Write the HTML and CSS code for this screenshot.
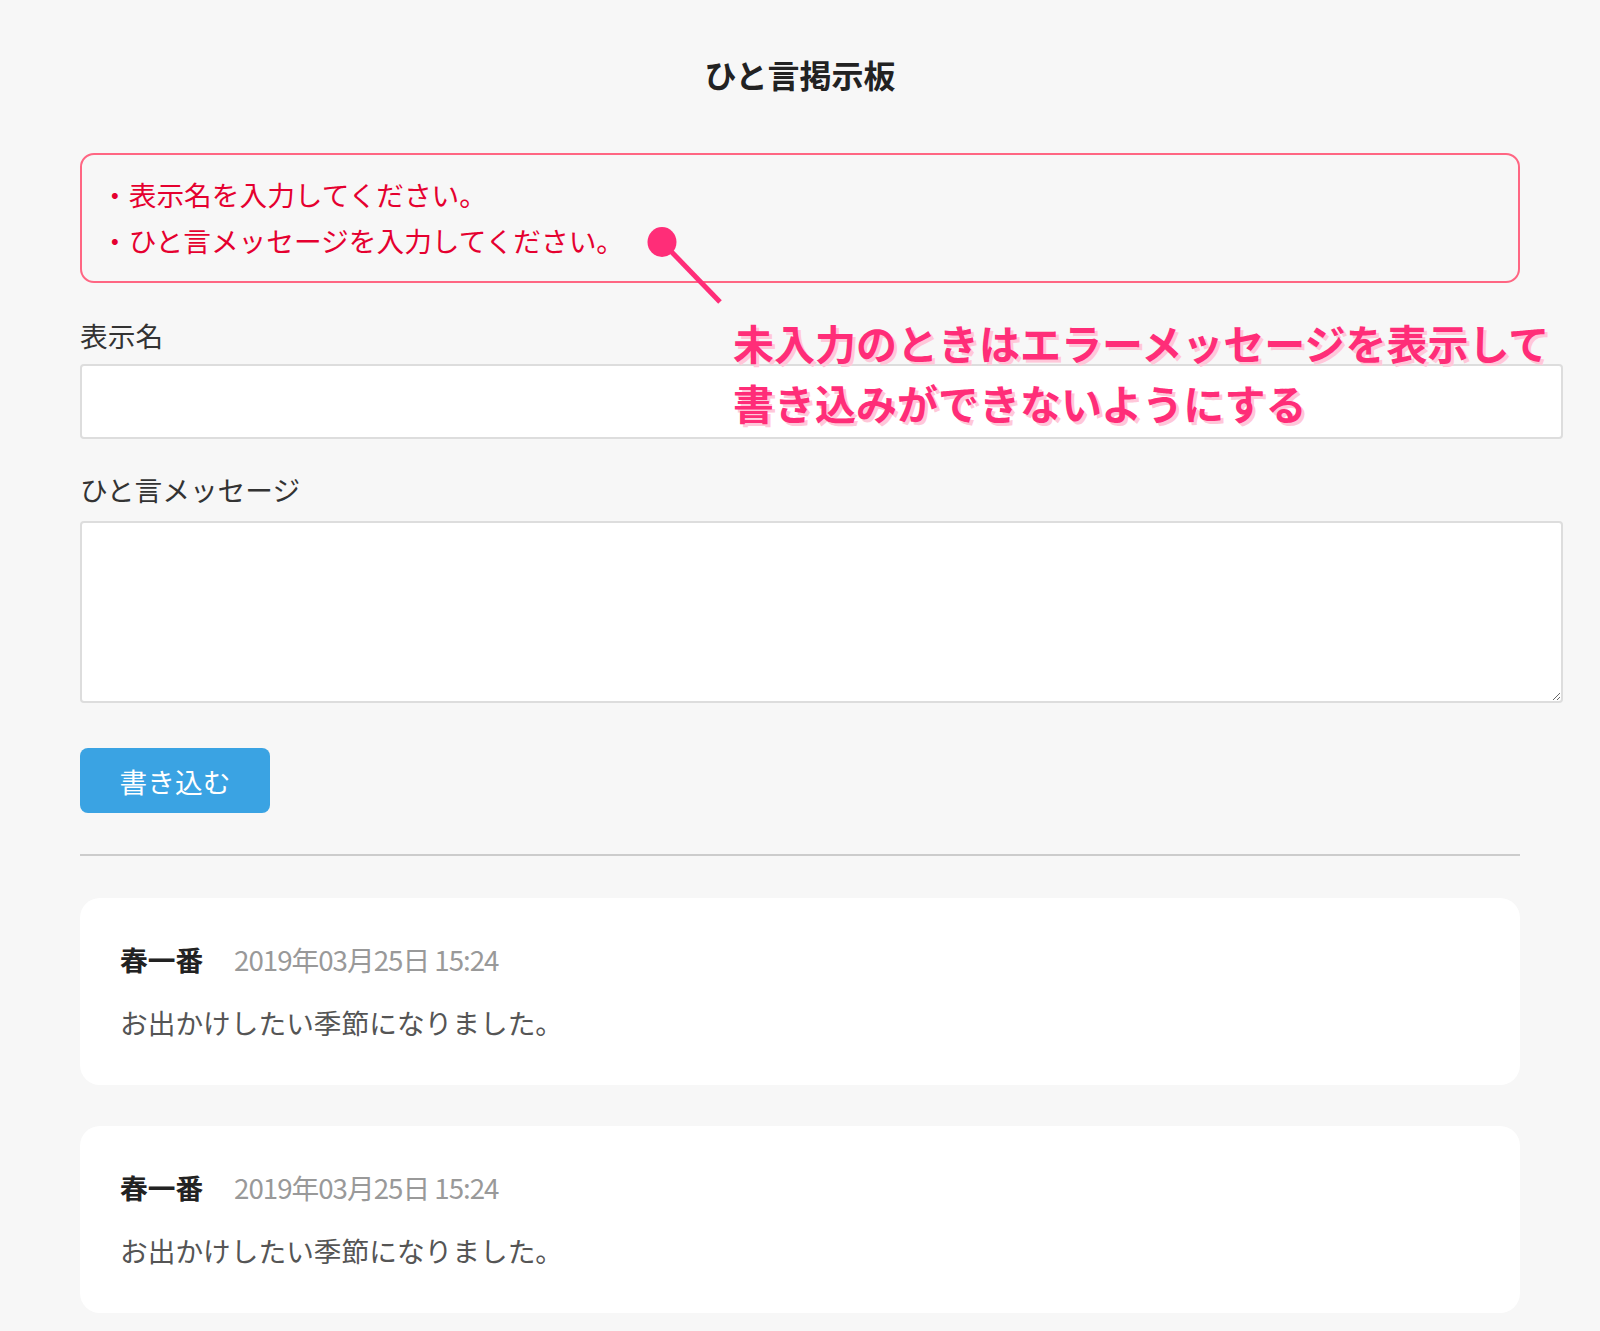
FILE: index.html
```html
<!DOCTYPE html>
<html lang="ja">
<head>
<meta charset="utf-8">
<title>ひと言掲示板</title>
<link rel="stylesheet" href="styles.css">
</head>
<body>
<div class="page">
  <h1 class="title">ひと言掲示板</h1>
  <div class="main">
    <ul class="errors">
      <li>・表示名を入力してください。</li>
      <li>・ひと言メッセージを入力してください。</li>
    </ul>
    <form class="form">
      <div class="field">
        <label class="label label-name" for="view_name">表示名</label>
        <input class="input" id="view_name" type="text">
      </div>
      <div class="field">
        <label class="label label-msg" for="message">ひと言メッセージ</label>
        <textarea class="textarea" id="message"></textarea>
      </div>
      <button class="submit" type="button">書き込む</button>
    </form>
    <hr class="divider">
    <section class="messages">
      <article class="msg">
        <div class="msg-head"><span class="msg-name">春一番</span><time class="msg-date">2019年03月25日 15:24</time></div>
        <p class="msg-body">お出かけしたい季節になりました。</p>
      </article>
      <article class="msg">
        <div class="msg-head"><span class="msg-name">春一番</span><time class="msg-date">2019年03月25日 15:24</time></div>
        <p class="msg-body">お出かけしたい季節になりました。</p>
      </article>
    </section>
  </div>
  <svg class="pointer" width="100" height="100" viewBox="0 0 100 100" aria-hidden="true">
    <line x1="22" y1="22" x2="80" y2="82" stroke="#ff2d78" stroke-width="5"/>
    <ellipse cx="22" cy="22" rx="14.5" ry="15" fill="#ff2d78"/>
  </svg>
  <div class="annotation">未入力のときはエラーメッセージを表示して<br>書き込みができないようにする</div>
</div>
</body>
</html>
```

FILE: styles.css
```css
html, body {
  margin: 0;
  padding: 0;
}
body {
  background: #f7f7f7;
  font-family: "Noto Sans CJK JP", "Noto Sans", sans-serif;
  color: #222;
}
.page {
  position: relative;
  min-height: 1331px;
  padding-top: 50px;
  box-sizing: border-box;
}
.title {
  margin: 0;
  font-size: 32px;
  line-height: 48px;
  font-weight: 700;
  text-align: center;
  color: #222;
}
.main {
  width: 1440px;
  margin: 55px 0 0 80px;
}
.errors {
  list-style: none;
  margin: 0;
  padding: 16px 20px 18px 19px;
  border: 2px solid #ff6683;
  border-radius: 14px;
  font-size: 27.7px;
  line-height: 46px;
  color: #e5002f;
}
.errors li {
  margin: 0;
}
.form {
  margin-top: 32px;
}
.field {
  display: flex;
  flex-direction: column;
  align-items: flex-start;
}
.label {
  font-size: 27.7px;
  line-height: 40px;
  color: #333;
}
.label-name {
  margin-bottom: 9px;
}
.label-msg {
  margin-top: 30px;
  margin-bottom: 12px;
}
.input,
.textarea {
  box-sizing: content-box;
  width: 100%;
  padding: 0 19px 0 20px;
  border: 2px solid #dddddd;
  border-radius: 4px;
  background: #fff;
  font-family: inherit;
  font-size: 27px;
  margin: 0;
  outline: none;
}
.input {
  height: 71px;
}
.textarea {
  height: 158px;
  padding-top: 10px;
  padding-bottom: 10px;
  resize: both;
}
.submit {
  display: flex;
  align-items: center;
  justify-content: center;
  margin-top: 45px;
  width: 190px;
  height: 65px;
  padding: 0;
  border: none;
  border-radius: 8px;
  background: #3aa3e3;
  color: #fff;
  font-family: inherit;
  font-size: 27.7px;
  line-height: 40px;
}
.divider {
  margin: 41px 0 0;
  height: 2px;
  border: none;
  background: #cccccc;
}
.messages {
  display: flex;
  flex-direction: column;
  gap: 41px;
  margin-top: 42px;
}
.msg {
  background: #fff;
  border-radius: 20px;
  padding: 41px 40px 43px;
}
.msg-head {
  display: flex;
  align-items: baseline;
  font-size: 27.7px;
  line-height: 40px;
}
.msg-name {
  font-weight: 700;
  color: #222;
}
.msg-date {
  margin-left: 31px;
  color: #999;
  letter-spacing: -1px;
}
.msg-body {
  margin: 23px 0 0;
  font-size: 27.7px;
  line-height: 40px;
  color: #555;
}
.pointer {
  position: absolute;
  left: 640px;
  top: 220px;
}
.annotation {
  position: absolute;
  left: 733px;
  top: 312px;
  font-size: 41px;
  line-height: 60px;
  font-weight: 700;
  color: #ff2d78;
  white-space: nowrap;
  text-shadow: 3px 3px 0 #ffc7d9;
}
```
